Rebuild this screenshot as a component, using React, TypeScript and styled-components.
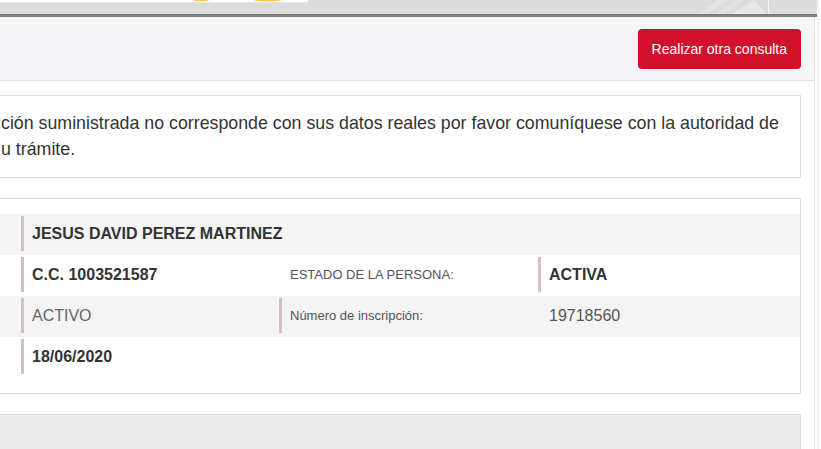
import React from "react";
import styled, { createGlobalStyle } from "styled-components";

const GlobalStyle = createGlobalStyle`
  html, body { margin: 0; padding: 0; background: #ffffff; overflow: hidden; }
  body { font-family: "Liberation Sans", Arial, sans-serif; color: #333; }
  * { box-sizing: border-box; }
`;

const Page = styled.div`
  display: flex;
  width: 821px;
  height: 449px;
  overflow: hidden;
`;

const Main = styled.div`
  width: 817px;
  display: flex;
  flex-direction: column;
`;

const Gutter = styled.div`
  flex: 1;
  background: #fff;
  border-left: 2px solid #f3f3f3;
`;

const Banner = styled.div`
  flex-shrink: 0;
  height: 14px;
  display: flex;
  background: #dcdcde;
`;

const BannerLogo = styled.svg`
  width: 308px;
  height: 14px;
  display: block;
`;

const BannerFill = styled.div`
  flex: 1;
  display: flex;
  justify-content: flex-end;
`;

const BannerDeco = styled.svg`
  width: 80px;
  height: 14px;
  display: block;
`;

const BannerSide = styled.div`
  width: 49px;
  background: #dcdcdd;
  border-left: 1px solid #f4f4f5;
`;

const DarkRule = styled.div`
  flex-shrink: 0;
  height: 3px;
  background: #7f7f7f;
`;

const Content = styled.div`
  flex: 1;
  min-height: 0;
  display: flex;
  flex-direction: column;
  margin-right: 2px;
  border-right: 1px solid #e3e3e3;
`;

const Toolbar = styled.div`
  flex-shrink: 0;
  height: 64px;
  background: #f5f5f7;
  border-bottom: 1px solid #e2e2e4;
  display: flex;
  justify-content: flex-end;
  align-items: flex-start;
  padding: 12px 13px 0 0;
`;

const PrimaryButton = styled.button`
  height: 40px;
  padding: 0 14px;
  border: none;
  border-radius: 4px;
  background: #d0112b;
  color: #fff;
  font-family: "Liberation Sans", Arial, sans-serif;
  font-size: 14px;
  cursor: pointer;
`;

const Body = styled.div`
  display: flex;
  flex-direction: column;
  gap: 20px;
  padding: 14px 13px 0 0;
`;

const Box = styled.div<{ $muted?: boolean }>`
  flex-shrink: 0;
  border: 1px solid #dddddd;
  border-left: none;
  background: ${(p) => (p.$muted ? "#ededed" : "#ffffff")};
`;

const Notice = styled(Box)`
  padding: 14px 10px 15px 1px;
  font-size: 17.8px;
  line-height: 26px;
  color: #333;
  white-space: nowrap;
`;

const Card = styled(Box)`
  padding: 15px 0;
`;

const Row = styled.div<{ $shade?: boolean }>`
  display: grid;
  grid-template-columns: 258px 259px 1fr;
  padding-left: 21px;
  height: 41px;
  background: ${(p) => (p.$shade ? "#f4f4f4" : "#ffffff")};
`;

const Cell = styled.div<{ $bar?: boolean; $span?: number }>`
  grid-column: span ${(p) => p.$span ?? 1};
  margin: 2px 0 4px;
  display: flex;
  align-items: center;
  padding-left: 8px;
  border-left: 3px solid ${(p) => (p.$bar ? "#d4bfc1" : "transparent")};
`;

const Value = styled.span<{ $tone?: "strong" | "muted" | "plain" }>`
  font-size: 16px;
  font-weight: ${(p) => (p.$tone === "strong" ? 700 : 400)};
  color: ${(p) =>
    p.$tone === "strong" ? "#333333" : p.$tone === "muted" ? "#666666" : "#555555"};
`;

const Label = styled.span`
  font-size: 13px;
  color: #555555;
`;

const Footer = styled(Box)`
  height: 60px;
`;

export default function App() {
  return (
    <>
      <GlobalStyle />
      <Page>
        <Main>
          <Banner>
            <BannerLogo viewBox="0 0 308 14">
              <rect x="0" y="0" width="308" height="2.3" fill="#ffffff" />
              <ellipse cx="201" cy="-7" rx="15" ry="8.6" fill="#f8cd53" />
              <ellipse cx="268" cy="-7" rx="25" ry="8.6" fill="#f8cd53" />
            </BannerLogo>
            <BannerFill>
              <BannerDeco viewBox="0 0 80 14">
                <polygon points="10,14 30,0 40,0 20,14" fill="#e4e4e6" />
                <polygon points="28,14 48,0 56,0 36,14" fill="#e2e2e4" />
                <polygon points="44,14 66,0 79,14" fill="#e8e8ea" />
              </BannerDeco>
              <BannerSide />
            </BannerFill>
          </Banner>
          <DarkRule />
          <Content>
            <Toolbar>
              <PrimaryButton>Realizar otra consulta</PrimaryButton>
            </Toolbar>
            <Body>
              <Notice>
                ción suministrada no corresponde con sus datos reales por favor comuníquese con la autoridad de
                <br />u trámite.
              </Notice>
              <Card>
                <Row $shade>
                  <Cell $bar $span={3}>
                    <Value $tone="strong">JESUS DAVID PEREZ MARTINEZ</Value>
                  </Cell>
                </Row>
                <Row>
                  <Cell $bar>
                    <Value $tone="strong">C.C. 1003521587</Value>
                  </Cell>
                  <Cell>
                    <Label>ESTADO DE LA PERSONA:</Label>
                  </Cell>
                  <Cell $bar>
                    <Value $tone="strong">ACTIVA</Value>
                  </Cell>
                </Row>
                <Row $shade>
                  <Cell $bar>
                    <Value $tone="muted">ACTIVO</Value>
                  </Cell>
                  <Cell $bar>
                    <Label>Número de inscripción:</Label>
                  </Cell>
                  <Cell>
                    <Value $tone="plain">19718560</Value>
                  </Cell>
                </Row>
                <Row>
                  <Cell $bar>
                    <Value $tone="strong">18/06/2020</Value>
                  </Cell>
                </Row>
              </Card>
              <Footer $muted />
            </Body>
          </Content>
        </Main>
        <Gutter />
      </Page>
    </>
  );
}
